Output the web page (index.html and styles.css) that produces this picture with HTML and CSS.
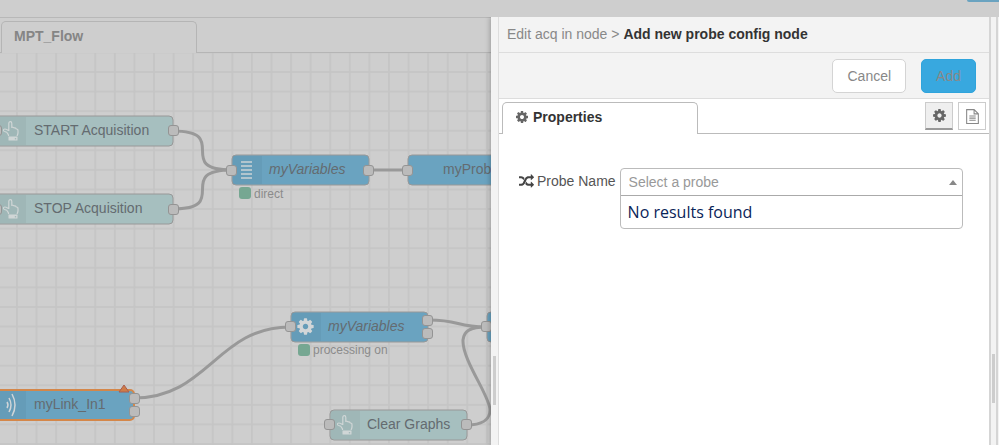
FILE: index.html
```html
<!DOCTYPE html>
<html lang="en">
<head>
<meta charset="utf-8">
<title>MPT_Flow</title>
<link rel="stylesheet" href="styles.css">
</head>
<body>
<svg class="symbols" aria-hidden="true">
  <symbol id="cog" viewBox="0 0 1792 1792"><path d="M1152 896q0-106-75-181t-181-75-181 75-75 181 75 181 181 75 181-75 75-181zm512-109v222q0 12-8 23t-20 13l-185 28q-19 54-39 91 35 50 107 138 10 12 10 25t-9 23q-27 37-99 108t-94 71q-12 0-26-9l-138-108q-44 23-91 38-16 136-29 186-7 28-36 28h-222q-14 0-24.500-8.500t-11.500-21.500l-28-184q-49-16-90-37l-141 107q-10 9-25 9-14 0-25-11-126-114-165-168-7-10-7-23 0-12 8-23 15-21 51-66.500t54-70.500q-27-50-41-99l-183-27q-13-2-21-12.500t-8-23.500v-222q0-12 8-23t19-13l186-28q14-46 39-92-40-57-107-138-10-12-10-24 0-10 9-23 26-36 98.500-107.500t94.500-71.500q13 0 26 10l138 107q44-23 91-38 16-136 29-186 7-28 36-28h222q14 0 24.500 8.500t11.500 21.500l28 184q49 16 90 37l142-107q9-9 24-9 13 0 25 10 129 119 165 170 7 8 7 22 0 12-8 23-15 21-51 66.500t-54 70.500q26 50 41 98l183 28q13 2 21 12.500t8 23.500z"/></symbol>
  <symbol id="shuffle" viewBox="0 0 1792 1792"><path d="M666 481q-60 92-137 273-22-45-37-72.500t-40.500-63.500-51-56.500-63-35-81.500-14.500h-224q-14 0-23-9t-9-23v-192q0-14 9-23t23-9h224q250 0 410 225zm1126 799q0 14-9 23l-320 320q-9 9-23 9-13 0-22.500-9.500t-9.500-22.500v-192q-32 0-85 .5t-81 1-73-1-71-5-64-10.500-63-18.500-58-28.500-59-40-55-53.500-56-69.500q59-93 136-273 22 45 37 72.500t40.500 63.500 51 56.500 63 35 81.500 14.500h256v-192q0-14 9-23t23-9q12 0 24 10l319 319q9 9 9 23zm0-896q0 14-9 23l-320 320q-9 9-23 9-13 0-22.500-9.500t-9.500-22.500v-192h-256q-48 0-87 15t-69 45-51 61.500-45 77.500q-32 62-78 171-29 66-49.500 111t-54 105-64 100-74 83-90 68.500-106.500 42-128 16.500h-224q-14 0-23-9t-9-23v-192q0-14 9-23t23-9h224q48 0 87-15t69-45 51-61.500 45-77.500q32-62 78-171 29-66 49.500-111t54-105 64-100 74-83 90-68.500 106.500-42 128-16.500h256v-192q0-14 9-23t23-9q12 0 24 10l319 319q9 9 9 23z"/></symbol>
  <symbol id="hand" viewBox="0 0 18 22"><path d="M6.500 16V15C5.500 12.500 4 11.500 2.500 11.500C1 11.200 1 9 2.800 9C4.500 9 5.500 10 6.800 10.500V3.500C6.800 1 9.800 1 9.800 3.500V7.500Q11.300 6.800 12.300 8Q13.800 7.500 14.300 9Q16 8.800 16 11V12.500Q16 14 15.200 15.500V16" fill="none" stroke="#d0d6d6" stroke-width="1.200" stroke-linejoin="round"/><path d="M6.500 16.500H15.500V20.500H6.500Z" fill="#d0d6d6"/><circle cx="13.500" cy="18.700" r=".8" fill="#a0b7b7"/></symbol>
  <symbol id="port" viewBox="0 0 11 11"><rect x=".5" y=".5" width="10" height="10" rx="2.500" fill="#bbb" stroke="#949494"/></symbol>
</svg>

<header class="topbar"><div class="deploy"></div></header>
<main class="editor">
  <section class="workspace">
    <nav class="flow-tabs"><a class="flow-tab" href="#flow">MPT_Flow</a></nav>
    <svg class="canvas" id="flow" aria-label="Flow">
      <defs>
        <pattern id="grid" width="20" height="20" patternUnits="userSpaceOnUse" patternTransform="translate(16 71) scale(.979)">
          <path d="M0 1H20M1 0V20" stroke="#c4c4c4" stroke-width="1.600" fill="none"/>
        </pattern>
      </defs>
      <g transform="translate(0 -53)">
        <rect y="53" width="100%" height="100%" fill="url(#grid)"/>
        <g class="wires">
          <path d="M173 131C232 131 173 170 232 170"/>
          <path d="M173 209C232 209 173 170 232 170"/>
          <path d="M369 170H408"/>
          <path d="M134 398C208 398 217 327 290 327"/>
          <path d="M429 320C460 320 456 327 486 327"/>
          <path d="M467 425C481 425 490 420 490 410C490 396 462 360 463 340C464 331 470 327 486 327"/>
        </g>

        <g class="node pale">
          <rect x="-20" y="116" width="193" height="30" rx="4"/>
          <path class="icon-shade" d="M-1 117H26V145H-1Z"/>
          <use href="#port" x="-9" y="125" width="11" height="11"/>
          <use href="#hand" x="2" y="120" width="18" height="22"/>
          <text x="34" y="135">START Acquisition</text>
          <use href="#port" x="168" y="125" width="11" height="11"/>
        </g>
        <g class="node pale">
          <rect x="-20" y="194" width="193" height="30" rx="4"/>
          <path class="icon-shade" d="M-1 195H26V223H-1Z"/>
          <use href="#port" x="-9" y="204" width="11" height="11"/>
          <use href="#hand" x="2" y="198" width="18" height="22"/>
          <text x="34" y="213">STOP Acquisition</text>
          <use href="#port" x="168" y="204" width="11" height="11"/>
        </g>
        <g class="node">
          <rect x="232" y="155" width="137" height="30" rx="4"/>
          <path class="icon-shade" d="M233 156H262V184H233Z"/>
          <path d="M241 162H252M241 166H252M241 170H252M241 174H252M241 178H252" stroke="#ccd2d5" stroke-width="1.500"/>
          <text class="italic" x="269" y="174">myVariables</text>
          <use href="#port" x="226" y="165" width="11" height="11"/>
          <use href="#port" x="363" y="165" width="11" height="11"/>
        </g>
        <g class="status">
          <rect x="239" y="187" width="12" height="12" rx="3"/>
          <text x="254" y="198">direct</text>
        </g>
        <g class="node">
          <rect x="408" y="155" width="137" height="30" rx="4"/>
          <text x="443" y="174">myProb</text>
          <use href="#port" x="402" y="165" width="11" height="11"/>
        </g>
        <g class="node">
          <rect x="291" y="312" width="137" height="30" rx="4"/>
          <path class="icon-shade" d="M292 313H321V341H292Z"/>
          <use href="#cog" x="296" y="317" width="19" height="19" fill="#d2d6d8"/>
          <text class="italic" x="328" y="331">myVariables</text>
          <use href="#port" x="285" y="321" width="11" height="11"/>
          <use href="#port" x="422" y="315" width="11" height="11"/>
          <use href="#port" x="422" y="328" width="11" height="11"/>
        </g>
        <g class="status">
          <rect x="298" y="344" width="12" height="12" rx="3"/>
          <text x="313" y="354">processing on</text>
        </g>
        <g class="node">
          <rect x="487" y="312" width="60" height="30" rx="4"/>
          <use href="#port" x="481" y="321" width="11" height="11"/>
        </g>
        <g class="node selected">
          <rect x="-20" y="390" width="154" height="30" rx="4"/>
          <path class="icon-shade" d="M-1 391H26V419H-1Z"/>
          <path d="M7 402Q9 405 7 408M9 398Q13 405 9 412M12 394Q18 405 12 416" fill="none" stroke="#d0d5d8" stroke-width="1.500"/>
          <text x="34" y="409">myLink_In1</text>
          <use href="#port" x="129" y="393" width="11" height="11"/>
          <use href="#port" x="129" y="406" width="11" height="11"/>
          <path d="M124 385L129 392H119Z" fill="#cf7c48" stroke="#a85f50"/>
        </g>
        <g class="node pale">
          <rect x="330" y="410" width="137" height="30" rx="4"/>
          <path class="icon-shade" d="M331 411H360V439H331Z"/>
          <use href="#hand" x="336" y="414" width="18" height="22"/>
          <text x="367" y="429">Clear Graphs</text>
          <use href="#port" x="324" y="419" width="11" height="11"/>
          <use href="#port" x="461" y="419" width="11" height="11"/>
        </g>
      </g>
    </svg>
  </section>

  <aside class="tray">
    <div class="resizer"><i class="grip"></i></div>
    <form class="panel">
      <div class="crumbs"><a href="#acq">Edit acq in node</a> &gt; <strong>Add new probe config node</strong></div>
      <div class="toolbar">
        <button class="button" type="button">Cancel</button>
        <button class="button primary" type="button">Add</button>
      </div>
      <div class="tabs">
        <a class="tab" href="#properties"><svg class="icon" aria-hidden="true"><use href="#cog"/></svg>Properties</a>
        <div class="tab-tools">
          <button class="tool active" type="button" aria-label="Properties"><svg class="icon" aria-hidden="true"><use href="#cog"/></svg></button>
          <button class="tool" type="button" aria-label="Description"><svg class="doc" viewBox="0 0 14 16" aria-hidden="true"><path d="M1.500 1.500H8.500L12.500 5.500V14.500H1.500ZM8.500 1.500V5.500H12.500M4 7.500H10M4 9.500H10M4 11.500H10" fill="none" stroke="currentColor"/></svg></button>
        </div>
      </div>
      <div class="form-row" id="properties">
        <label for="probe"><svg class="icon" aria-hidden="true"><use href="#shuffle"/></svg>Probe Name</label>
        <div class="picker">
          <div class="select-box">
            <select id="probe"><option>Select a probe</option></select>
            <i class="arrow"></i>
          </div>
          <div class="results">No results found</div>
        </div>
      </div>
    </form>
  </aside>
  <div class="separator"><i class="grip"></i></div>
  <div class="sidebar"></div>
</main>
</body>
</html>
```
FILE: styles.css
```css
* { box-sizing: border-box; }

body {
  margin: 0;
  min-height: 100vh;
  display: flex;
  flex-direction: column;
  overflow: hidden;
  background: #cecece;
  color: #888;
  font: 14px/20px "Liberation Sans", Arial, sans-serif;
}

a { color: inherit; text-decoration: none; }
.symbols { position: absolute; width: 0; height: 0; }

.topbar {
  height: 17px;
  display: flex;
  justify-content: flex-end;
  align-items: flex-start;
}
.deploy {
  width: 32px;
  height: 2px;
  background: #6aa3c0;
  border-bottom-left-radius: 3px;
}

.editor { flex: 1; display: flex; min-height: 0; }

/* Flow workspace */
.workspace {
  flex: 1;
  min-width: 0;
  display: flex;
  flex-direction: column;
  border-top: 1px solid #b8b8b8;
}
.flow-tabs {
  height: 35px;
  padding: 3px 0 0 1px;
  border-bottom: 1px solid #b5b5b5;
}
.flow-tab {
  display: block;
  width: 196px;
  height: 32px;
  padding: 4px 12px;
  border: 1px solid #b5b5b5;
  border-bottom: 0;
  border-radius: 5px 5px 0 0;
  background: #cecece;
  color: #858585;
  font-weight: bold;
}
.canvas { display: block; flex: 1; width: 100%; min-height: 0; }
.wires path { fill: none; stroke: #999; stroke-width: 3px; }
.node > rect { fill: #6aa3c0; stroke: #989898; }
.node text { fill: #646b70; font-size: 14px; }
.node .italic { font-style: italic; }
.node.pale > rect { fill: #a6bfbf; }
.node.selected > rect { stroke: #d4874a; stroke-width: 2px; }
.icon-shade { fill: #000; fill-opacity: .04; }
.status rect { fill: #76a792; }
.status text { fill: #8b8b8b; font-size: 12px; }

/* Edit tray */
.tray {
  flex: 0 0 500px;
  display: flex;
  background: #fff;
  box-shadow: -1px 0 5px rgba(0, 0, 0, .25);
  clip-path: inset(0 0 0 -10px);
}
.resizer,
.separator {
  display: flex;
  align-items: center;
  justify-content: center;
  background: #f3f3f3;
}
.resizer { width: 8px; border-right: 1px solid #ddd; padding-top: 298px; }
.separator {
  width: 5px;
  padding-top: 294px;
}
.grip { width: 3px; height: 49px; background: #cdcdcd; }
.panel {
  flex: 1;
  min-width: 0;
  border-right: 2px solid #d5d5d5;
}
.sidebar { width: 3px; border-left: 2px solid #d5d5d5; background: #f3f3f3; }

.crumbs {
  height: 36px;
  padding: 7px 8px;
  border-bottom: 1px solid #ddd;
  background: #f3f3f3;
}
.crumbs strong { color: #333; }
.toolbar {
  height: 46px;
  padding: 6px 13px;
  display: flex;
  justify-content: flex-end;
  align-items: flex-start;
  gap: 15px;
  border-bottom: 1px solid #ddd;
  background: #f3f3f3;
}
.button {
  height: 34px;
  padding: 0 14px;
  border: 1px solid #d4d4d4;
  border-radius: 5px;
  background: #fff;
  color: #888;
  font: inherit;
}
.button.primary { border-color: #2fa4dc; background: #38a8df; }

.tabs {
  height: 35px;
  padding: 3px 3px 0;
  display: flex;
  justify-content: space-between;
  border-bottom: 1px solid #bbb;
}
.tab {
  width: 196px;
  height: 32px;
  padding: 4px 12px;
  display: flex;
  gap: 4px;
  border: 1px solid #bbb;
  border-bottom: 0;
  border-radius: 5px 5px 0 0;
  background: #fff;
  color: #333;
  font-weight: bold;
}
.icon { width: 14px; height: 14px; fill: #666; }
.tab .icon { margin-top: 3px; }
.tab-tools { display: flex; gap: 5px; }
.tool {
  width: 28px;
  height: 28px;
  padding: 0;
  display: flex;
  align-items: center;
  justify-content: center;
  border: 1px solid #ccc;
  background: #fff;
  color: #888;
}
.tool.active { background: #efefef; border-bottom: 2px solid #999; }
.tool .icon { width: 15px; height: 15px; }
.doc { width: 15px; height: 17px; }

.form-row { display: flex; gap: 4px; padding: 34px 26px 0 20px; }
.form-row label { display: flex; align-items: center; gap: 3px; height: 26px; color: #555; }
.form-row label .icon { width: 15px; height: 15px; fill: #444; }
.picker { flex: 1; border: 1px solid #bbb; border-radius: 4px; }
.select-box { position: relative; height: 27px; border-bottom: 1px solid #aaa; }
.select-box select {
  width: 100%;
  height: 26px;
  padding: 0 8px;
  border: 0;
  appearance: none;
  background: transparent;
  color: #999;
  font: inherit;
}
.arrow {
  position: absolute;
  right: 5px;
  top: 11px;
  border: 4px solid transparent;
  border-top: 0;
  border-bottom: 5px solid #888;
}
.results {
  padding: 4px 7px;
  color: #0a2458;
  font: 16px/24px "Open Sans", sans-serif;
}
```
